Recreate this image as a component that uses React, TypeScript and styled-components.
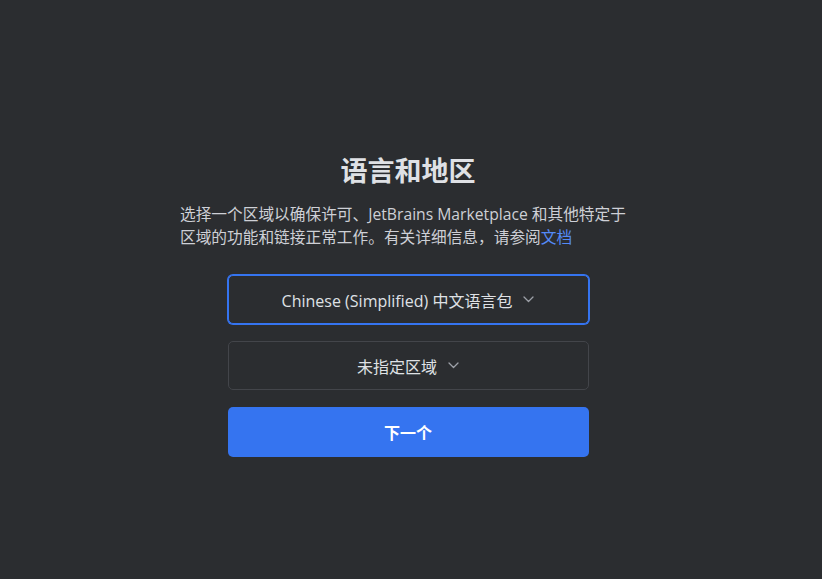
import React from "react";
import styled, { createGlobalStyle } from "styled-components";

const Global = createGlobalStyle`
  html, body { margin: 0; padding: 0; background: #2b2d30; }
  body { font-family: "Open Sans", "Noto Sans CJK SC", sans-serif; }
  #root { min-height: 579px; }
`;

const Page = styled.div`
  min-height: 579px;
  box-sizing: border-box;
  display: flex;
  justify-content: center;
  padding: 152px 6px 0 0;
  background: #2b2d30;
`;

const Column = styled.div`
  width: 456px;
  display: flex;
  flex-direction: column;
  align-items: center;
`;

const Title = styled.h1`
  margin: 0;
  font-family: "Noto Sans CJK SC", sans-serif;
  font-size: 27px;
  line-height: 36px;
  font-weight: 700;
  color: #dfe1e5;
`;

const Description = styled.p`
  margin: 15px 0 0 0;
  align-self: stretch;
  font-family: "Open Sans", "Noto Sans CJK SC", sans-serif;
  font-size: 15.7px;
  line-height: 23px;
  color: #ced0d6;
  text-align: left;
  white-space: nowrap;
`;

const Link = styled.a`
  color: #548af7;
  text-decoration: none;
`;

const Actions = styled.div`
  margin-top: 26px;
  width: 361px;
  display: flex;
  flex-direction: column;
  gap: 17px;
`;

const Select = styled.button<{ $focused?: boolean }>`
  height: 49px;
  box-sizing: border-box;
  display: flex;
  align-items: center;
  justify-content: center;
  gap: 11px;
  background: #2b2d30;
  border: 1px solid ${(p) => (p.$focused ? "#3574f0" : "#43454a")};
  box-shadow: ${(p) => (p.$focused ? "0 0 0 1px #3574f0" : "none")};
  border-radius: 5px;
  font-family: "Open Sans", "Noto Sans CJK SC", sans-serif;
  font-size: 16px;
  color: #dfe1e5;
  padding: 0 16px;
  cursor: pointer;
`;

const Primary = styled.button`
  height: 50px;
  box-sizing: border-box;
  border: none;
  border-radius: 5px;
  background: #3574f0;
  color: #ffffff;
  font-family: "Open Sans", "Noto Sans CJK SC", sans-serif;
  font-size: 16px;
  font-weight: 700;
  cursor: pointer;
`;

const Chevron = () => (
  <svg width="11" height="7" viewBox="0 0 11 7" fill="none">
    <path d="M1 1l4.5 4.5L10 1" stroke="#9da0a8" strokeWidth="1.3" strokeLinecap="round" strokeLinejoin="round" />
  </svg>
);

export default function App() {
  return (
    <>
      <Global />
      <Page>
        <Column>
          <Title>语言和地区</Title>
          <Description>
            选择一个区域以确保许可、JetBrains Marketplace 和其他特定于
            <br />
            区域的功能和链接正常工作。有关详细信息，请参阅
            <Link href="#">文档</Link>
          </Description>
          <Actions>
            <Select $focused>
              <span>Chinese (Simplified) 中文语言包</span>
              <Chevron />
            </Select>
            <Select>
              <span>未指定区域</span>
              <Chevron />
            </Select>
            <Primary>下一个</Primary>
          </Actions>
        </Column>
      </Page>
    </>
  );
}
